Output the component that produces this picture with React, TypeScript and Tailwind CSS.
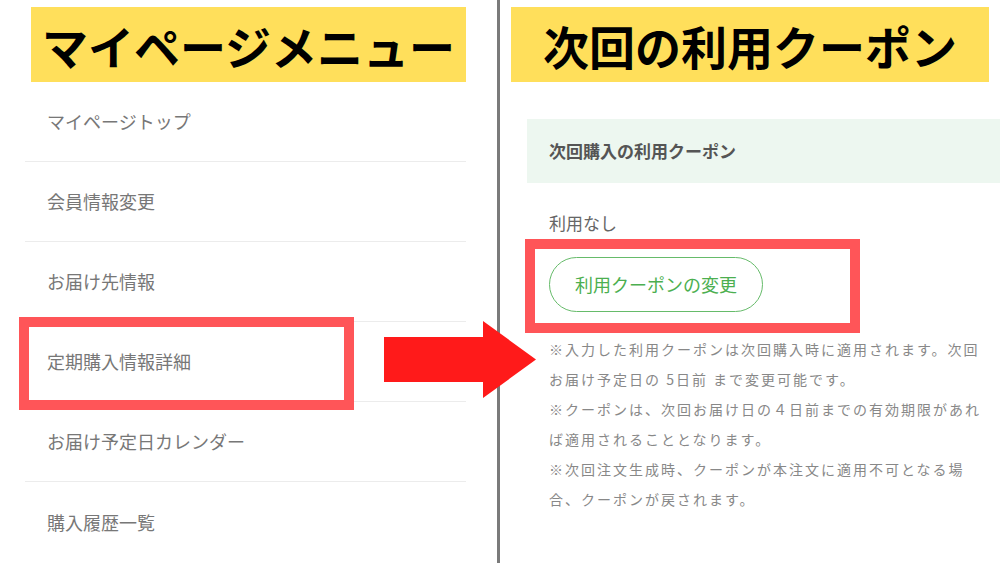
import React from 'react';

const menuItems = [
  'マイページトップ',
  '会員情報変更',
  'お届け先情報',
  '定期購入情報詳細',
  'お届け予定日カレンダー',
  '購入履歴一覧',
];

const font = { fontFamily: '"Noto Sans CJK JP", "Noto Sans", sans-serif' };

const App: React.FC = () => {
  return (
    <div className="relative flex w-[1000px] h-[563px] overflow-hidden bg-white" style={font}>
      {/* Left: menu */}
      <div className="w-[497px] pt-[7px]">
        <div className="ml-[31px] w-[435px] h-[75px] bg-[#ffdf5b] flex items-center justify-center text-[46px] font-bold text-black leading-none">
          マイページメニュー
        </div>
        <ul className="ml-[25px] w-[441px]">
          {menuItems.map((item, i) => (
            <li
              key={item}
              className={`h-[80px] pl-[22px] flex items-center text-[18px] text-[#777] ${i < menuItems.length - 1 ? 'border-b border-[#ececec]' : ''}`}
            >
              {item}
            </li>
          ))}
        </ul>
      </div>

      {/* Divider */}
      <div className="w-[3px] h-full bg-[#7a7a7a]" />

      {/* Right: coupon */}
      <div className="flex-1 pt-[7px]">
        <div className="ml-[11px] w-[478px] h-[75px] bg-[#ffdf5b] flex items-center justify-center text-[46px] font-bold text-black leading-none">
          次回の利用クーポン
        </div>
        <div className="mt-[37px] ml-[27px] h-[64px] bg-[#edf7f0] flex items-center pl-[22px] text-[17px] font-bold text-[#555]">
          次回購入の利用クーポン
        </div>
        <div className="ml-[49px]">
          <p className="mt-[25px] h-[30px] leading-[30px] text-[17px] text-[#666]">利用なし</p>
          <button className="mt-[19px] w-[214px] h-[55px] rounded-full border-[1.5px] border-[#66bb6a] text-[18px] text-[#4caf50] flex items-center justify-center">
            利用クーポンの変更
          </button>
          <div className="mt-[22px] text-[14px] leading-[30px] tracking-[2px] text-[#888]">
            <p>
              ※入力した利用クーポンは次回購入時に適用されます。次回
              <br />
              お届け予定日の 5日前 まで変更可能です。
            </p>
            <p>
              ※クーポンは、次回お届け日の４日前までの有効期限があれ
              <br />
              ば適用されることとなります。
            </p>
            <p>
              ※次回注文生成時、クーポンが本注文に適用不可となる場
              <br />
              合、クーポンが戻されます。
            </p>
          </div>
        </div>
      </div>

      {/* Annotations */}
      <div className="absolute left-[19px] top-[317px] w-[335px] h-[93px] border-[10px] border-[#ff5558]" />
      <div className="absolute left-[525px] top-[239px] w-[335px] h-[94px] border-[10px] border-[#ff5558]" />
      <svg className="absolute left-[384px] top-[321px]" width="152" height="77" viewBox="0 0 152 77">
        <polygon points="0,16 99,16 99,0 152,38.5 99,77 99,61 0,61" fill="#ff1a1a" />
      </svg>
    </div>
  );
};

export default App;
